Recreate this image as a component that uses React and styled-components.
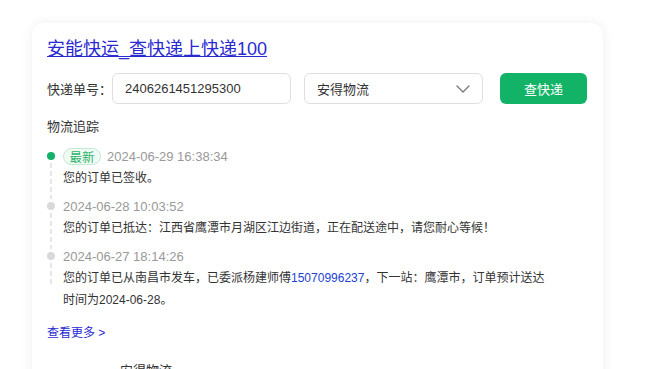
import React from "react";
import styled, { createGlobalStyle } from "styled-components";

const GlobalStyle = createGlobalStyle`
  * { box-sizing: border-box; }
  body {
    margin: 0;
    background: #fff;
    font-family: "Liberation Sans", "Noto Sans CJK SC", sans-serif;
    color: #333;
  }
`;

const Page = styled.main`
  padding: 23px 0 0 32px;
`;

const Card = styled.section`
  width: 571px;
  min-height: 380px;
  background: #fff;
  border-radius: 12px;
  box-shadow: 0 0 12px rgba(0, 0, 0, 0.07);
  padding: 14px 16px 0 15px;
`;

const Title = styled.a`
  display: block;
  font-size: 18px;
  line-height: 24px;
  color: #2a2ad2;
  text-decoration: underline;
  cursor: pointer;
`;

const SearchRow = styled.div`
  display: flex;
  align-items: center;
  margin-top: 12px;
  height: 31px;
`;

const Label = styled.span`
  font-size: 13px;
  width: 65px;
  flex-shrink: 0;
`;

const Field = styled.div`
  width: 179px;
  height: 31px;
  border: 1px solid #dedede;
  border-radius: 6px;
  display: flex;
  align-items: center;
  justify-content: space-between;
  padding: 0 12px 0 12px;
  font-size: 13px;
  color: #333;
  margin-right: ${(p) => p.$gap || 0}px;
`;

const Button = styled.button`
  width: 87px;
  height: 31px;
  border: none;
  border-radius: 6px;
  background: #12b366;
  color: #fff;
  font-size: 13px;
  font-family: inherit;
  cursor: pointer;
`;

const SectionTitle = styled.div`
  font-size: 13px;
  line-height: 20px;
  margin-top: 13px;
`;

const Timeline = styled.ul`
  list-style: none;
  margin: 8px 0 0;
  padding: 0;
`;

const Item = styled.li`
  position: relative;
  padding: 0 0 6px 16px;

  &::before {
    content: "";
    position: absolute;
    left: 0;
    top: 7px;
    width: 8px;
    height: 8px;
    border-radius: 50%;
    background: ${(p) => (p.$active ? "#12b366" : "#d9d9d9")};
  }

  &::after {
    content: "";
    position: absolute;
    left: 3px;
    top: 18px;
    width: 2px;
    height: ${(p) => (p.$last ? "24px" : "calc(100% - 14px)")};
    background: repeating-linear-gradient(
      to bottom,
      #e6e6e6 0 5px,
      transparent 5px 8px
    );
  }
`;

const DateRow = styled.div`
  display: flex;
  align-items: center;
  gap: 6px;
  height: 22px;
  font-size: 13px;
  color: #999;
`;

const Tag = styled.span`
  display: inline-flex;
  align-items: center;
  justify-content: center;
  width: 38px;
  height: 17px;
  border-radius: 9px;
  border: 1px solid #bfe9d1;
  background: #f1fbf5;
  color: #2fb36a;
  font-size: 12.5px;
`;

const Content = styled.p`
  margin: 0;
  max-width: 490px;
  font-size: 12px;
  line-height: 22px;
  color: #333;
`;

const Phone = styled.span`
  color: #2142d4;
`;

const MoreLink = styled.a`
  display: block;
  margin-top: 6px;
  font-size: 12px;
  line-height: 20px;
  color: #2a2ad2;
  cursor: pointer;
`;

const NextCompany = styled.div`
  margin: 17px 0 0 73px;
  font-size: 13px;
  color: #333;
`;

const Chevron = () => (
  <svg width="14" height="8" viewBox="0 0 14 8" fill="none">
    <path d="M1 1l6 6 6-6" stroke="#777" strokeWidth="1.3" strokeLinecap="round" strokeLinejoin="round" />
  </svg>
);

const App = () => {
  return (
    <Page>
      <GlobalStyle />
      <Card>
        <Title>安能快运_查快递上快递100</Title>
        <SearchRow>
          <Label>快递单号：</Label>
          <Field $gap={13}>2406261451295300</Field>
          <Field $gap={17}>
            安得物流
            <Chevron />
          </Field>
          <Button>查快递</Button>
        </SearchRow>
        <SectionTitle>物流追踪</SectionTitle>
        <Timeline>
          <Item $active>
            <DateRow>
              <Tag>最新</Tag>
              2024-06-29 16:38:34
            </DateRow>
            <Content>您的订单已签收。</Content>
          </Item>
          <Item>
            <DateRow>2024-06-28 10:03:52</DateRow>
            <Content>
              您的订单已抵达：江西省鹰潭市月湖区江边街道，正在配送途中，请您耐心等候！
            </Content>
          </Item>
          <Item $last>
            <DateRow>2024-06-27 18:14:26</DateRow>
            <Content>
              您的订单已从南昌市发车，已委派杨建师傅<Phone>15070996237</Phone>，下一站：鹰潭市，订单预计送达时间为2024-06-28。
            </Content>
          </Item>
        </Timeline>
        <MoreLink>查看更多 &gt;</MoreLink>
        <NextCompany>安得物流</NextCompany>
      </Card>
    </Page>
  );
};

export default App;
